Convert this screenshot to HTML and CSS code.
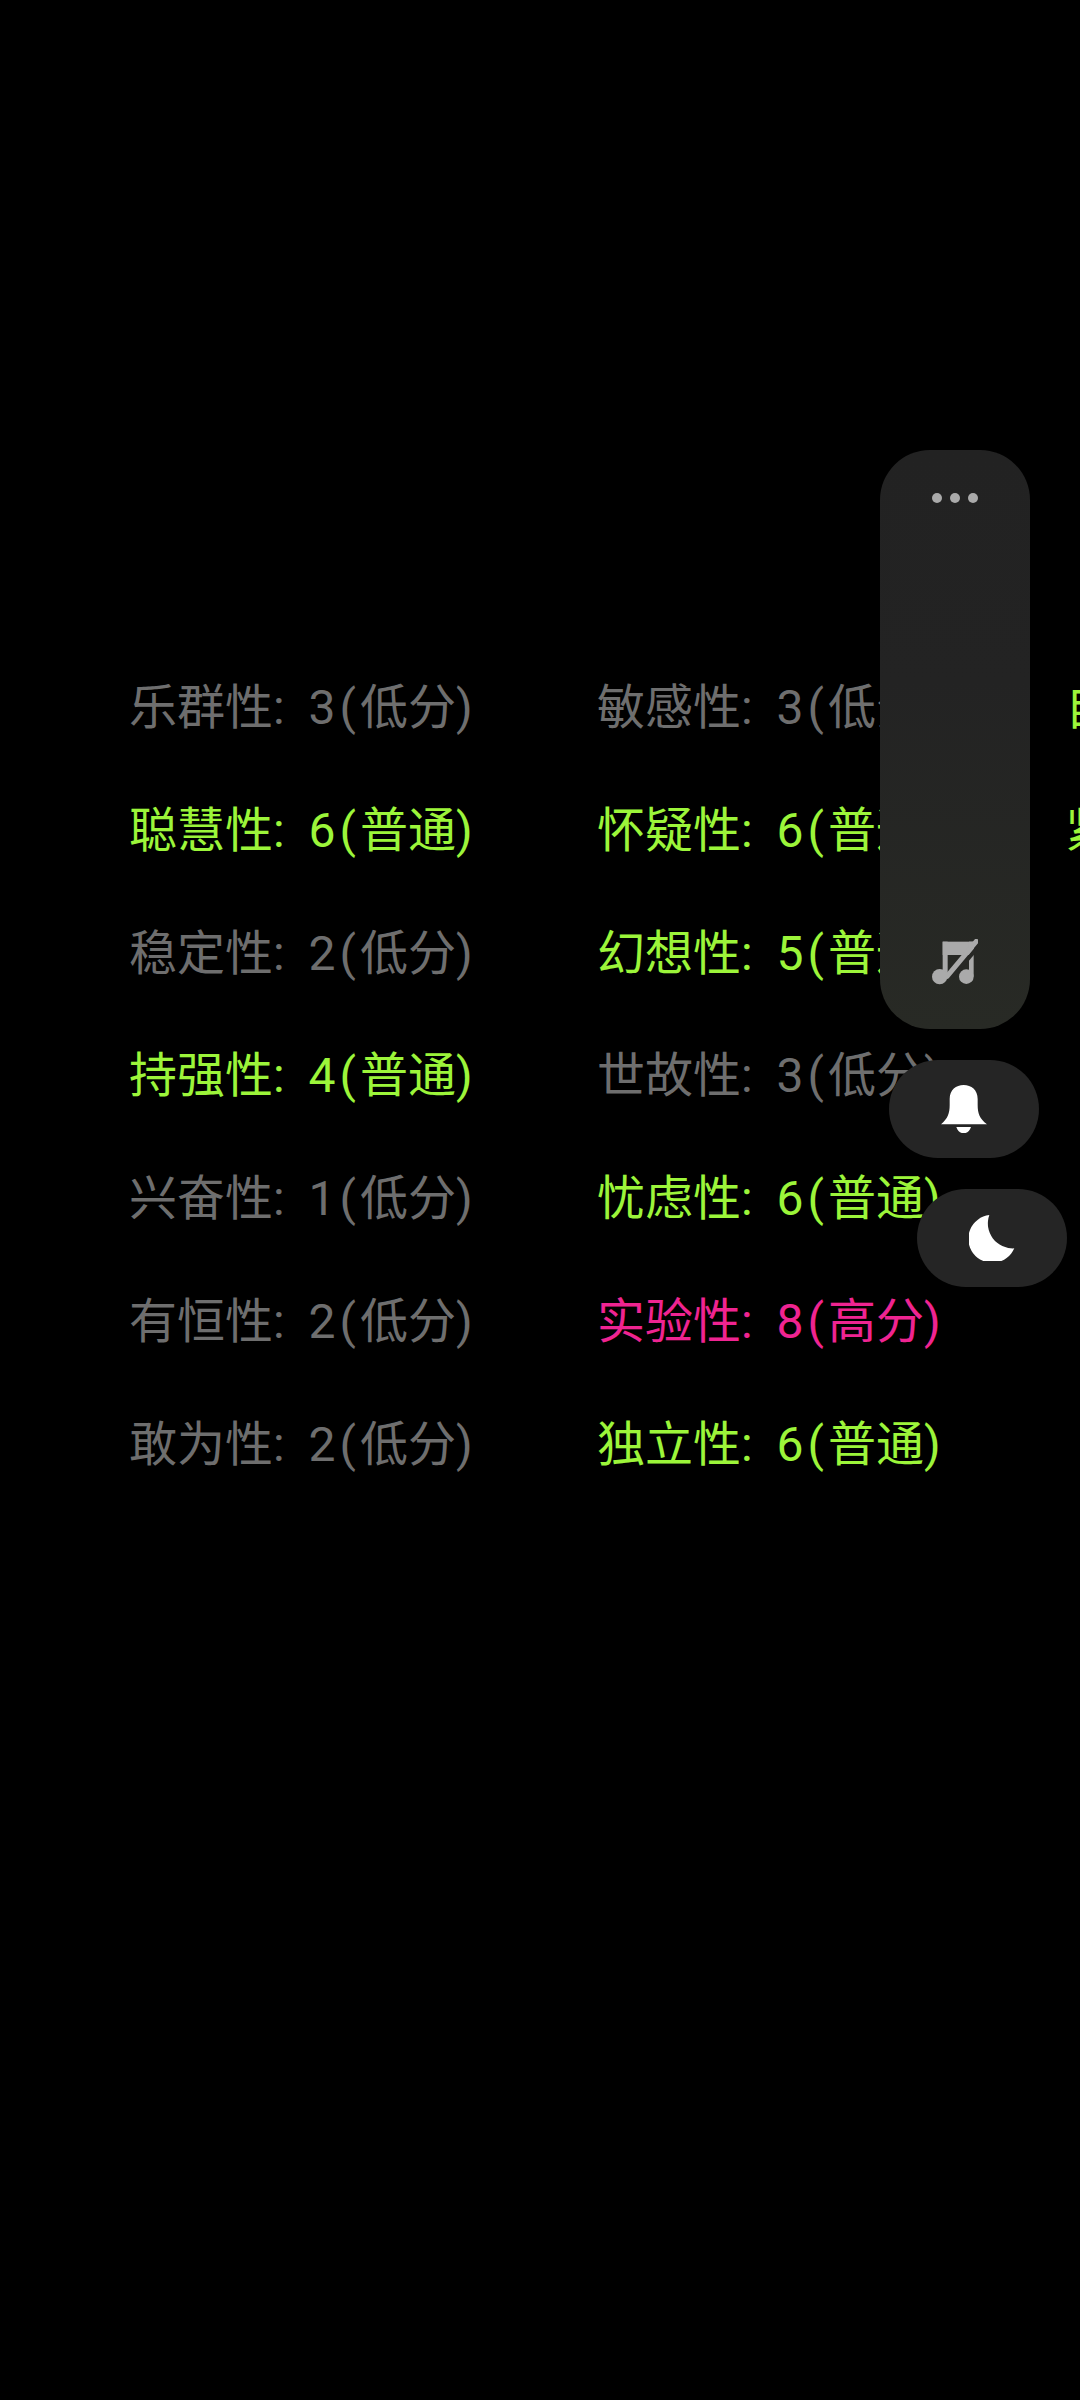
FILE: index.html
```html
<!DOCTYPE html>
<html lang="zh-CN">
<head>
<meta charset="utf-8">
<title>16PF</title>
<link rel="stylesheet" href="styles.css">
</head>
<body>
<main class="traits">
  <div class="trait low">乐群性: <span class="num">3(</span>低分)</div>
  <div class="trait mid">聪慧性: <span class="num">6(</span>普通)</div>
  <div class="trait low">稳定性: <span class="num">2(</span>低分)</div>
  <div class="trait mid">持强性: <span class="num">4(</span>普通)</div>
  <div class="trait low">兴奋性: <span class="num">1(</span>低分)</div>
  <div class="trait low">有恒性: <span class="num">2(</span>低分)</div>
  <div class="trait low">敢为性: <span class="num">2(</span>低分)</div>
  <div class="trait low">敏感性: <span class="num">3(</span>低分)</div>
  <div class="trait mid">怀疑性: <span class="num">6(</span>普通)</div>
  <div class="trait mid">幻想性: <span class="num">5(</span>普通)</div>
  <div class="trait low">世故性: <span class="num">3(</span>低分)</div>
  <div class="trait mid">忧虑性: <span class="num">6(</span>普通)</div>
  <div class="trait high">实验性: <span class="num">8(</span>高分)</div>
  <div class="trait mid">独立性: <span class="num">6(</span>普通)</div>
  <div class="trait mid">自律性: <span class="num">6(</span>普通)</div>
  <div class="trait mid">紧张性: <span class="num">6(</span>普通)</div>
</main>
<aside class="panel">
  <div class="dots"><span class="dot"></span><span class="dot"></span><span class="dot"></span></div>
  <svg class="music" viewBox="65 60 140 140" aria-label="music off">
    <rect x="97" y="68" width="93" height="40" fill="#aaaaaa"/>
    <rect x="97" y="68" width="15" height="105" fill="#aaaaaa"/>
    <rect x="176" y="68" width="14" height="105" fill="#aaaaaa"/>
    <circle cx="88" cy="173" r="23" fill="#aaaaaa"/>
    <circle cx="168" cy="173" r="22" fill="#aaaaaa"/>
    <path d="M208 78 L124 178" stroke="#272825" stroke-width="12" fill="none"/>
    <path d="M198 67 L110 172" stroke="#aaaaaa" stroke-width="15" stroke-linecap="round" fill="none"/>
  </svg>
</aside>
<button class="pill pill-bell" aria-label="bell">
  <svg class="bell" viewBox="242 165 138 145">
    <path d="M242 283 C262 266 268 250 268 225 L268 207 C268 180 287 165 310 165 C333 165 352 180 352 207 L352 225 C352 250 358 266 380 283 Z" fill="#ffffff"/>
    <path d="M288 291 H332 C328 303 320 310 310 310 C300 310 292 303 288 291 Z" fill="#ffffff"/>
  </svg>
</button>
<button class="pill pill-moon" aria-label="moon">
  <svg class="moon" viewBox="327 555 136 140">
    <path d="M388 555 A72 72 0 1 0 463 655 A75 75 0 0 1 388 555 Z" fill="#ffffff"/>
  </svg>
</button>
</body>
</html>
```
FILE: styles.css
```css
html, body {
  margin: 0;
  padding: 0;
  width: 1080px;
  height: 2400px;
  background: #000000;
  overflow: hidden;
}
.traits {
  box-sizing: border-box;
  width: 1080px;
  padding: 647px 0 0 129px;
  display: grid;
  grid-auto-flow: column;
  grid-template-rows: repeat(7, 122.83px);
  grid-auto-columns: 468px;
  overflow: hidden;
  font-family: Roboto, "Noto Sans CJK SC", sans-serif;
  font-size: 48px;
  line-height: 122.83px;
  word-spacing: 12px;
}
.trait {
  white-space: nowrap;
}
.num {
  letter-spacing: 4px;
}
.low { color: #6e6e6e; }
.mid { color: #9cf53a; }
.high { color: #ef2491; }
.panel {
  position: absolute;
  left: 880px;
  top: 450px;
  width: 150px;
  height: 579px;
  box-sizing: border-box;
  padding: 43px 0 43px;
  border-radius: 50px;
  background: linear-gradient(180deg, #222222 0%, #232323 40%, #282a25 100%);
  display: flex;
  flex-direction: column;
  justify-content: space-between;
  align-items: center;
}
.dots {
  display: flex;
  gap: 8px;
}
.dot {
  width: 10px;
  height: 10px;
  border-radius: 50%;
  background: #aaaaaa;
}
.music {
  width: 46.67px;
  height: 46.67px;
}
.pill {
  position: absolute;
  width: 150px;
  height: 98px;
  padding: 0;
  border: 0;
  border-radius: 49px;
  background: #252525;
  display: flex;
  align-items: center;
  justify-content: center;
}
.pill-bell { left: 889px; top: 1060px; }
.pill-moon { left: 917px; top: 1189px; }
.bell { width: 46px; height: 48.3px; }
.moon { width: 45.3px; height: 46.7px; }
```
